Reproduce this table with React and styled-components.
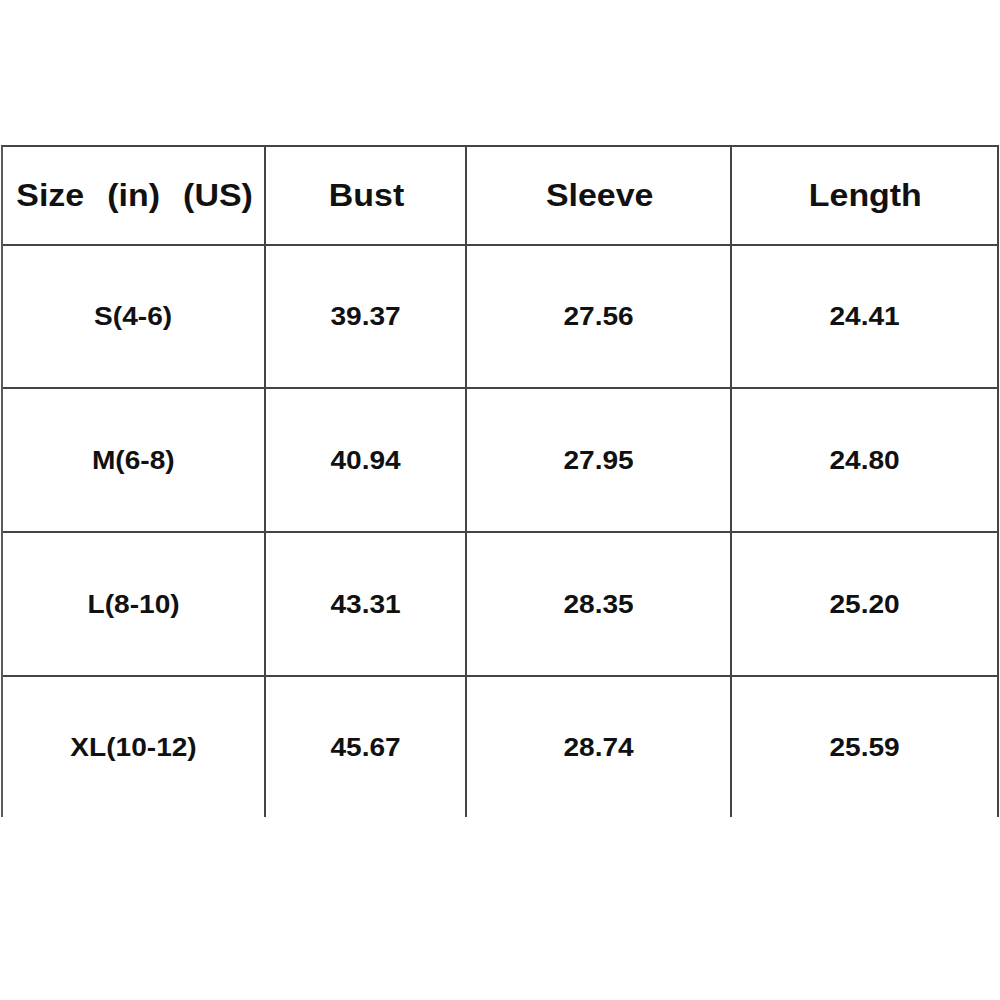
import React from "react";
import styled, { createGlobalStyle } from "styled-components";

const GlobalStyle = createGlobalStyle`
  html, body {
    margin: 0;
    padding: 0;
    background: #fff;
    font-family: "Liberation Sans", Arial, sans-serif;
  }
`;

const headers = ["Size  (in)  (US)", "Bust", "Sleeve", "Length"];

const rows = [
  ["S(4-6)", "39.37", "27.56", "24.41"],
  ["M(6-8)", "40.94", "27.95", "24.80"],
  ["L(8-10)", "43.31", "28.35", "25.20"],
  ["XL(10-12)", "45.67", "28.74", "25.59"],
];

const App = () => {
  return (
    <>
      <GlobalStyle />
      <Page>
        <SizeTable>
          {headers.map((h) => (
            <Cell key={h}>
              <HeadText>{h}</HeadText>
            </Cell>
          ))}
          {rows.map((row, i) =>
            row.map((value, j) => (
              <Cell key={`${i}-${j}`} $last={i === rows.length - 1}>
                <DataText>{value}</DataText>
              </Cell>
            ))
          )}
        </SizeTable>
      </Page>
    </>
  );
};

const Page = styled.div`
  width: 1000px;
  height: 1000px;
  padding-top: 145px;
  padding-left: 1px;
  box-sizing: border-box;
`;

const SizeTable = styled.div`
  display: grid;
  grid-template-columns: 263px 201px 265px 267px;
  grid-template-rows: 99px 143px 144px 144px 140px;
  width: 998px;
  border-top: 2px solid #444;
  border-left: 2px solid #5a5a5a;
  box-sizing: border-box;
`;

const Cell = styled.div`
  display: flex;
  align-items: center;
  justify-content: center;
  box-sizing: border-box;
  border-right: 2px solid #444;
  border-bottom: ${(p) => (p.$last ? "none" : "2px solid #444")};
  color: #111;
`;

const HeadText = styled.span`
  display: inline-block;
  font-size: 32px;
  font-weight: 700;
  white-space: pre;
  word-spacing: 2px;
  transform: scaleX(1.06);
  margin-left: 2px;
`;

const DataText = styled.span`
  display: inline-block;
  font-size: 26px;
  font-weight: 700;
  transform: scaleX(1.08);
`;

export default App;
